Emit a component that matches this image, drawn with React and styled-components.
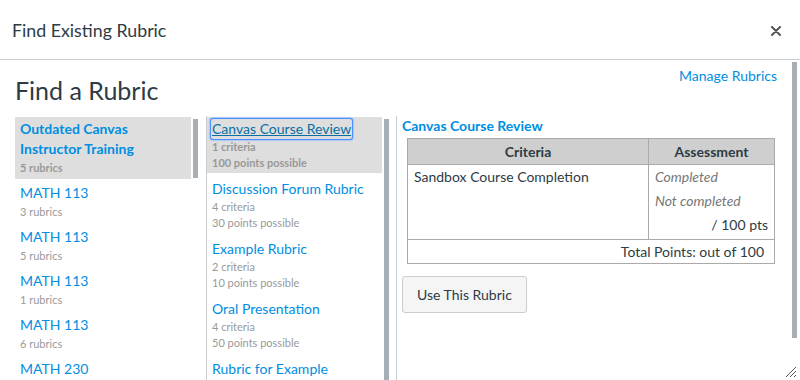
import styled, { createGlobalStyle } from "styled-components";

const Global = createGlobalStyle`
  html, body {
    margin: 0;
    padding: 0;
    background: #fff;
    overflow: hidden;
  }
  body {
    font-family: Lato, "Open Sans", sans-serif;
    color: #2d3b45;
  }
`;

const groups = [
  { name: "Outdated Canvas Instructor Training", count: "5 rubrics", selected: true },
  { name: "MATH 113", count: "3 rubrics" },
  { name: "MATH 113", count: "5 rubrics" },
  { name: "MATH 113", count: "1 rubrics" },
  { name: "MATH 113", count: "6 rubrics" },
  { name: "MATH 230", count: "2 rubrics" },
];

const rubrics = [
  { name: "Canvas Course Review", criteria: "1 criteria", points: "100 points possible", selected: true },
  { name: "Discussion Forum Rubric", criteria: "4 criteria", points: "30 points possible" },
  { name: "Example Rubric", criteria: "2 criteria", points: "10 points possible" },
  { name: "Oral Presentation", criteria: "4 criteria", points: "50 points possible" },
  { name: "Rubric for Example", criteria: "3 criteria", points: "15 points possible" },
];

export default function App() {
  return (
    <>
      <Global />
      <Dialog>
        <Header>
          <Title>Find Existing Rubric</Title>
          <Close aria-label="Close">
            <svg width="10" height="10" viewBox="0 0 10 10">
              <path d="M1 1 L9 9 M9 1 L1 9" stroke="#555" strokeWidth="2" strokeLinecap="round" />
            </svg>
          </Close>
        </Header>
        <Body>
          <Main>
            <TopRow>
              <Heading>Find a Rubric</Heading>
              <ManageLink href="#">Manage Rubrics</ManageLink>
            </TopRow>
            <Columns>
              <Column $width={192}>
                <List>
                  {groups.map((g, i) => (
                    <GroupItem key={i} $selected={g.selected}>
                      <ItemLink $bold={g.selected}>{g.name}</ItemLink>
                      <Meta $bold={g.selected} $lh={18}>{g.count}</Meta>
                    </GroupItem>
                  ))}
                </List>
                <Track $right={8}>
                  <Thumb $height={59} />
                </Track>
              </Column>
              <Column $width={190}>
                <List>
                  {rubrics.map((r, i) => (
                    <RubricItem key={i} $selected={r.selected}>
                      <ItemLink>
                        {r.selected ? <Focused>{r.name}</Focused> : r.name}
                      </ItemLink>
                      <Meta $bold={r.selected} $lh={16}>{r.criteria}</Meta>
                      <Meta $bold={r.selected} $lh={16}>{r.points}</Meta>
                    </RubricItem>
                  ))}
                </List>
                <Track $right={7}>
                  <Thumb $height={400} />
                </Track>
              </Column>
              <Preview>
                <PreviewTitle>Canvas Course Review</PreviewTitle>
                <Table>
                  <thead>
                    <tr>
                      <Th style={{ width: 240 }}>Criteria</Th>
                      <Th>Assessment</Th>
                    </tr>
                  </thead>
                  <tbody>
                    <tr>
                      <Td>Sandbox Course Completion</Td>
                      <Td>
                        <Rating>Completed</Rating>
                        <Rating>Not completed</Rating>
                        <Points>/ 100 pts</Points>
                      </Td>
                    </tr>
                    <tr>
                      <Total colSpan={2}>Total Points: out of 100</Total>
                    </tr>
                  </tbody>
                </Table>
                <UseButton>Use This Rubric</UseButton>
              </Preview>
            </Columns>
          </Main>
          <PageTrack>
            <Thumb $height={276} />
          </PageTrack>
        </Body>
        <Resize width="13" height="13" viewBox="0 0 13 13">
          <path d="M12 2 L2 12 M12 6 L6 12 M12 10 L10 12" stroke="#555" strokeWidth="1" />
        </Resize>
      </Dialog>
    </>
  );
}

const Dialog = styled.div`
  position: relative;
  width: 800px;
  height: 380px;
  display: flex;
  flex-direction: column;
  overflow: hidden;
`;

const Header = styled.header`
  height: 59px;
  flex-shrink: 0;
  border-bottom: 1px solid #c7cdd1;
  display: flex;
  align-items: center;
  justify-content: space-between;
  padding: 0 19px 0 12px;
`;

const Title = styled.h2`
  margin: 0;
  font-size: 17.8px;
  font-weight: 400;
  color: #2d3b45;
`;

const Close = styled.button`
  border: 0;
  background: none;
  padding: 0;
  display: flex;
  margin-top: 2px;
`;

const Body = styled.div`
  flex: 1;
  display: flex;
  min-height: 0;
`;

const Main = styled.div`
  flex: 1;
  display: flex;
  flex-direction: column;
  padding: 0 15px;
  min-width: 0;
`;

const TopRow = styled.div`
  display: flex;
  justify-content: space-between;
  align-items: flex-start;
`;

const Heading = styled.h1`
  margin: 15px 0 0;
  font-size: 25px;
  line-height: 30px;
  font-weight: 400;
  color: #2d3b45;
`;

const ManageLink = styled.a`
  margin: 6px 0 0 0;
  font-size: 14px;
  line-height: 20px;
  color: #008ee2;
  text-decoration: none;
`;

const Columns = styled.div`
  flex: 1;
  display: flex;
  margin-top: 11px;
  min-height: 0;
`;

const Column = styled.div`
  width: ${p => p.$width}px;
  flex-shrink: 0;
  display: flex;
  border-right: 1px solid #c7cdd1;
  box-sizing: border-box;
  overflow: hidden;
`;

const List = styled.div`
  flex: 1;
  padding-top: 1px;
  min-width: 0;
`;

const GroupItem = styled.div`
  padding: 2px 5px;
  margin-bottom: 2px;
  background: ${p => (p.$selected ? "#dedede" : "transparent")};
`;

const RubricItem = styled.div`
  padding: 2px 5px;
  margin-bottom: 4px;
  background: ${p => (p.$selected ? "#dedede" : "transparent")};
`;

const ItemLink = styled.div`
  font-size: 14px;
  line-height: 20px;
  color: #008ee2;
  font-weight: ${p => (p.$bold ? 700 : 400)};
`;

const Focused = styled.span`
  color: #0770a3;
  text-decoration: underline;
  padding: 1px 1px 2px;
  margin-left: -1px;
  border-radius: 2px;
  box-shadow: 0 0 0 1px #4d90fe, 0 0 1px 2px #a9c8f5;
`;

const Meta = styled.div`
  font-size: 11px;
  line-height: ${p => p.$lh}px;
  color: #999;
  font-weight: ${p => (p.$bold ? 700 : 400)};
`;

const Track = styled.div`
  width: 5px;
  margin: 0 ${p => p.$right}px 0 2px;
  padding-top: 3px;
  flex-shrink: 0;
`;

const Thumb = styled.div`
  width: 5px;
  height: ${p => p.$height}px;
  background: #a5afb5;
`;

const PageTrack = styled.div`
  width: 5px;
  margin: 2px 3px 0 0;
  flex-shrink: 0;
`;

const Preview = styled.div`
  flex: 1;
  padding-left: 5px;
  min-width: 0;
`;

const PreviewTitle = styled.div`
  font-size: 14px;
  line-height: 20px;
  font-weight: 700;
  color: #008ee2;
`;

const Table = styled.table`
  margin: 2px 0 0 5px;
  width: 368px;
  border-collapse: collapse;
  font-size: 14px;
  color: #2d3b45;
`;

const Th = styled.th`
  background: #cfcfcf;
  border: 1px solid #aaa;
  height: 25px;
  padding: 0;
  font-weight: 700;
  text-align: center;
  line-height: 20px;
`;

const Td = styled.td`
  border: 1px solid #aaa;
  vertical-align: top;
  padding: 0 6px 2px;
  line-height: 24px;
`;

const Rating = styled.div`
  font-style: italic;
  color: #777;
`;

const Points = styled.div`
  text-align: right;
`;

const Total = styled.td`
  border: 1px solid #aaa;
  text-align: right;
  padding: 0 10px;
  line-height: 23px;
`;

const UseButton = styled.button`
  margin-top: 12px;
  height: 37px;
  padding: 0 14px;
  font-family: inherit;
  font-size: 14px;
  color: #2d3b45;
  background: #f5f5f5;
  border: 1px solid #c7cdd1;
  border-radius: 3px;
`;

const Resize = styled.svg`
  position: absolute;
  right: 3px;
  bottom: 2px;
`;
